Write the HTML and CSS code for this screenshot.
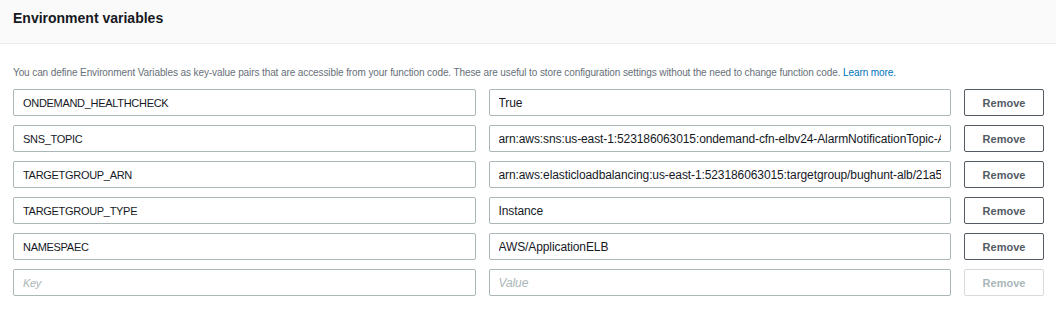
FILE: index.html
```html
<!DOCTYPE html>
<html lang="en">
  <head>
    <meta charset="UTF-8" />
    <meta name="viewport" content="width=device-width, initial-scale=1.0" />
    <title>Environment variables</title>
    <link rel="stylesheet" href="styles.css">
  </head>
  <body>
    <div class="panel">
      <div class="panel-header">
        <h2>Environment variables</h2>
      </div>

      <div class="panel-body">
        <p class="hint">
          You can define Environment Variables as key-value pairs that are accessible from your function code. These are useful to store configuration settings without the need to change function code.
          <a href="#">Learn more.</a>
        </p>

        <div class="env-list">
          <div class="env-row">
            <input class="field key" type="text" value="ONDEMAND_HEALTHCHECK" />
            <input class="field" type="text" value="True" />
            <button class="remove-btn">Remove</button>
          </div>
          <div class="env-row">
            <input class="field key" type="text" value="SNS_TOPIC" />
            <input class="field" type="text" value="arn:aws:sns:us-east-1:523186063015:ondemand-cfn-elbv24-AlarmNotificationTopic-ASX1" />
            <button class="remove-btn">Remove</button>
          </div>
          <div class="env-row">
            <input class="field key" type="text" value="TARGETGROUP_ARN" />
            <input class="field" type="text" value="arn:aws:elasticloadbalancing:us-east-1:523186063015:targetgroup/bughunt-alb/21a58c" />
            <button class="remove-btn">Remove</button>
          </div>
          <div class="env-row">
            <input class="field key" type="text" value="TARGETGROUP_TYPE" />
            <input class="field" type="text" value="Instance" />
            <button class="remove-btn">Remove</button>
          </div>
          <div class="env-row">
            <input class="field key" type="text" value="NAMESPAEC" />
            <input class="field" type="text" value="AWS/ApplicationELB" />
            <button class="remove-btn">Remove</button>
          </div>
          <div class="env-row">
            <input class="field key" type="text" placeholder="Key" />
            <input class="field" type="text" placeholder="Value" />
            <button class="remove-btn" disabled>Remove</button>
          </div>
        </div>
      </div>
    </div>
  </body>
</html>
```

FILE: styles.css
```css
body {
  font-family: "Liberation Sans", Arial, sans-serif;
  margin: 0;
  background: #fff;
  color: #16191f;
}
.panel-header {
  background: #fafafa;
  border-bottom: 1px solid #eaeded;
  height: 44px;
  box-sizing: border-box;
  padding: 0 13px;
  display: flex;
  align-items: center;
}
.panel-header h2 {
  margin: 0;
  font-size: 14px;
  font-weight: bold;
  color: #16191f;
  padding-bottom: 7px;
}
.panel-body {
  padding: 22px 12px 0 13px;
}
.hint {
  margin: 0 0 9px;
  font-size: 10px;
  line-height: 14px;
  letter-spacing: -0.1px;
  color: #687078;
}
.hint a {
  color: #0073bb;
  text-decoration: none;
}
.env-list {
  display: flex;
  flex-direction: column;
  gap: 9px;
}
.env-row {
  display: flex;
  gap: 13px;
}
.field {
  flex: 1;
  min-width: 0;
  height: 27px;
  box-sizing: border-box;
  border: 1px solid #aab7b8;
  border-radius: 2px;
  padding: 0 9px;
  font-family: inherit;
  font-size: 12px;
  letter-spacing: -0.1px;
  color: #16191f;
  background: #fff;
  outline: none;
}
.field.key {
  font-size: 11px;
  letter-spacing: -0.3px;
}
.field::placeholder {
  color: #aab7b8;
  font-style: italic;
}
.remove-btn {
  width: 80px;
  height: 27px;
  flex: none;
  box-sizing: border-box;
  border: 1px solid #545b64;
  border-radius: 2px;
  background: #fff;
  color: #545b64;
  font-family: inherit;
  font-size: 11px;
  font-weight: bold;
  padding: 0;
}
.remove-btn:disabled {
  border-color: #d5dbdb;
  color: #aab7b8;
}
```
